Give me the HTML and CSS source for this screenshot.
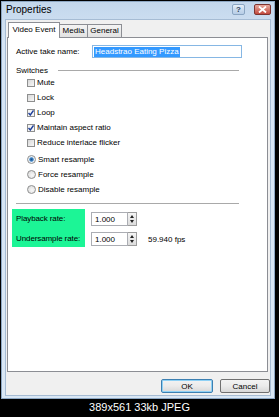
FILE: index.html
```html
<!DOCTYPE html>
<html>
<head>
	<title>Properties</title>
	<link rel="stylesheet" href="styles.css">
</head>
<body>
	<div class="window">
		<div class="titlebar">
			<span class="title">Properties</span>
			<span class="cap-btn help">?</span>
			<span class="cap-btn close">
				<svg width="9" height="7" viewBox="0 0 9 7"><path d="M1 0.5 L8 6.5 M8 0.5 L1 6.5" stroke="#fff" stroke-width="1.8"/></svg>
			</span>
		</div>

		<div class="dialog">
			<div class="tabs">
				<span class="tab active">Video Event</span>
				<span class="tab">Media</span>
				<span class="tab">General</span>
			</div>

			<div class="panel">
				<div class="field-row">
					<span class="field-label">Active take name:</span>
					<div class="textbox name"><span class="selected">Headstrao Eating Pizza</span></div>
				</div>

				<div class="group-head">
					<span>Switches</span>
					<span class="rule"></span>
				</div>

				<ul class="options">
					<li><span class="check"></span>Mute</li>
					<li><span class="check"></span>Lock</li>
					<li><span class="check on"><svg width="6" height="6" viewBox="0 0 6 6"><path d="M0.5 3 L2.3 5 L5.5 0.5" stroke="#1f3f9a" stroke-width="1.4" fill="none"/></svg></span>Loop</li>
					<li><span class="check on"><svg width="6" height="6" viewBox="0 0 6 6"><path d="M0.5 3 L2.3 5 L5.5 0.5" stroke="#1f3f9a" stroke-width="1.4" fill="none"/></svg></span>Maintain aspect ratio</li>
					<li><span class="check"></span>Reduce interlace flicker</li>
				</ul>

				<ul class="options radios">
					<li><span class="radio on"></span>Smart resample</li>
					<li><span class="radio"></span>Force resample</li>
					<li><span class="radio"></span>Disable resample</li>
				</ul>

				<div class="divider"></div>

				<div class="rates">
					<div class="rate-labels">
						<span>Playback rate:</span>
						<span>Undersample rate:</span>
					</div>
					<div class="rate-fields">
						<div class="rate-row">
							<div class="textbox num">1.000</div>
							<span class="spin"><i class="up"></i><i class="down"></i></span>
						</div>
						<div class="rate-row">
							<div class="textbox num">1.000</div>
							<span class="spin"><i class="up"></i><i class="down"></i></span>
							<span class="fps">59.940 fps</span>
						</div>
					</div>
				</div>
			</div>

			<div class="buttons">
				<button class="btn default">OK</button>
				<button class="btn">Cancel</button>
			</div>
		</div>
	</div>

	<div class="caption">389x561 33kb JPEG</div>
</body>
</html>
```

FILE: styles.css
```css
body {
	margin: 0;
	width: 279px;
	height: 417px;
	background: #000;
	font-family: "Liberation Sans", Arial, sans-serif;
	font-size: 8px;
	color: #000;
	overflow: hidden;
}
.window {
	margin: 1px 0 0 1px;
	width: 274px;
	height: 398px;
	box-sizing: border-box;
	border: 1px solid #8da7c3;
	padding: 0 3px 2px 3px;
	background: linear-gradient(#c3d7ec, #d5e4f4 40px, #d9e7f5);
	display: flex;
	flex-direction: column;
}
.titlebar {
	height: 17px;
	display: flex;
	align-items: flex-start;
	padding-top: 2px;
	box-sizing: border-box;
}
.title {
	padding-left: 1px;
	font-size: 10px;
	line-height: 12px;
	flex: 1;
}
.cap-btn {
	height: 11px;
	box-sizing: border-box;
	display: flex;
	align-items: center;
	justify-content: center;
	border-radius: 2px;
}
.help {
	width: 13px;
	margin-right: 9px;
	border: 1px solid #8aa5c2;
	background: linear-gradient(#e6eff8, #c9dbee 50%, #b7cde6);
	font-size: 8px;
	font-weight: bold;
	color: #2c3f57;
}
.close {
	width: 17px;
	border: 1px solid #7e3430;
	background: linear-gradient(#e9a99f, #d57a6e 50%, #c24a3e);
}
.dialog {
	flex: 1;
	background: #f0f0f0;
	border: 1px solid #a6bcd4;
	padding: 2px 0 0 1px;
	display: flex;
	flex-direction: column;
}
.tabs {
	display: flex;
	align-items: flex-end;
	height: 15px;
	margin-left: 1px;
}
.tab {
	height: 13px;
	box-sizing: border-box;
	border: 1px solid #8c8e94;
	border-bottom: none;
	background: linear-gradient(#f4f4f4, #e2e2e2);
	line-height: 12px;
	text-align: center;
	margin-left: -1px;
}
.tab:nth-child(1) { width: 52px; margin-left: 0; }
.tab:nth-child(2) { width: 29px; }
.tab:nth-child(3) { width: 35px; }
.tab.active {
	position: relative;
	height: 16px;
	margin-bottom: -1px;
	background: #fff;
	line-height: 14px;
	z-index: 1;
}
.panel {
	height: 335px;
	box-sizing: border-box;
	margin-right: 2px;
	border: 1px solid #8c8e94;
	background: #fff;
	padding-left: 8px;
}
.field-row {
	display: flex;
	align-items: center;
	margin-top: 7px;
	height: 13px;
}
.field-label {
	width: 76px;
}
.textbox {
	box-sizing: border-box;
	border: 1px solid #abadb3;
	background: #fff;
	display: flex;
	align-items: center;
}
.textbox.name {
	width: 150px;
	height: 13px;
	border-color: #86b7e4;
	padding-left: 1px;
}
.selected {
	background: #3399ff;
	color: #fff;
	line-height: 10px;
	padding: 0 1px;
}
.group-head {
	display: flex;
	align-items: center;
	width: 223px;
	height: 10px;
	margin-top: 7px;
}
.rule {
	flex: 1;
	height: 1px;
	margin-left: 10px;
	background: #a9a9a9;
}
.options {
	list-style: none;
	margin: 0 0 0 11px;
	padding: 0;
}
.options li {
	height: 15px;
	display: flex;
	align-items: center;
}
.radios {
	margin-top: 2px;
}
.check {
	width: 8px;
	height: 8px;
	box-sizing: border-box;
	border: 1px solid #8e8f8f;
	background: linear-gradient(135deg, #d8d8d8, #f7f7f7);
	margin-right: 2px;
	display: flex;
	align-items: center;
	justify-content: center;
}
.check.on {
	background: #f4f4f4;
}
.radio {
	width: 9px;
	height: 9px;
	box-sizing: border-box;
	border: 1px solid #8e8f8f;
	border-radius: 50%;
	background: radial-gradient(circle at 60% 60%, #f8f8f8, #d6d6d6);
	margin-right: 2px;
}
.radio.on {
	background: radial-gradient(circle, #1a4f8a 0, #3f86c8 1.8px, #e9eef3 2.6px, #f4f4f4);
}
.divider {
	width: 223px;
	height: 1px;
	margin-top: 6px;
	background: #a9a9a9;
}
.rates {
	display: flex;
	margin: 5px 0 0 -4px;
}
.rate-labels {
	width: 73px;
	box-sizing: border-box;
	background: #1cf596;
	padding: 3px 2px 1px 4px;
	display: flex;
	flex-direction: column;
	gap: 6px;
	white-space: nowrap;
}
.rate-labels span {
	height: 14px;
	line-height: 14px;
	letter-spacing: -0.1px;
}
.rate-fields {
	margin-left: 6px;
	padding-top: 3px;
	display: flex;
	flex-direction: column;
	gap: 6px;
}
.rate-row {
	display: flex;
	align-items: center;
	height: 14px;
}
.textbox.num {
	width: 37px;
	height: 14px;
	padding-left: 3px;
}
.spin {
	width: 9px;
	height: 14px;
	box-sizing: border-box;
	border: 1px solid #9c9c9c;
	border-left: none;
	background: linear-gradient(#f5f5f5, #dcdcdc);
	display: flex;
	flex-direction: column;
	align-items: center;
	justify-content: space-around;
	padding: 1px 0;
}
.spin i {
	width: 0;
	height: 0;
	border-left: 2.5px solid transparent;
	border-right: 2.5px solid transparent;
}
.spin .up {
	border-bottom: 3px solid #222;
}
.spin .down {
	border-top: 3px solid #222;
}
.fps {
	margin-left: 11px;
}
.buttons {
	display: flex;
	justify-content: flex-end;
	gap: 7px;
	margin-top: 7px;
}
.btn {
	height: 14px;
	box-sizing: border-box;
	padding: 0;
	border: 1px solid #707070;
	border-radius: 2px;
	background: linear-gradient(#f3f3f3, #ebebeb 50%, #d8d8d8);
	font-family: "Liberation Sans", Arial, sans-serif;
	font-size: 8px;
	color: #000;
}
.btn.default {
	width: 52px;
	border-color: #3c7fb1;
	box-shadow: inset 0 0 0 1px #8fd1f5;
}
.btn:not(.default) {
	width: 50px;
}
.caption {
	height: 17px;
	line-height: 17px;
	text-align: center;
	color: #fff;
	font-size: 11px;
}
```
